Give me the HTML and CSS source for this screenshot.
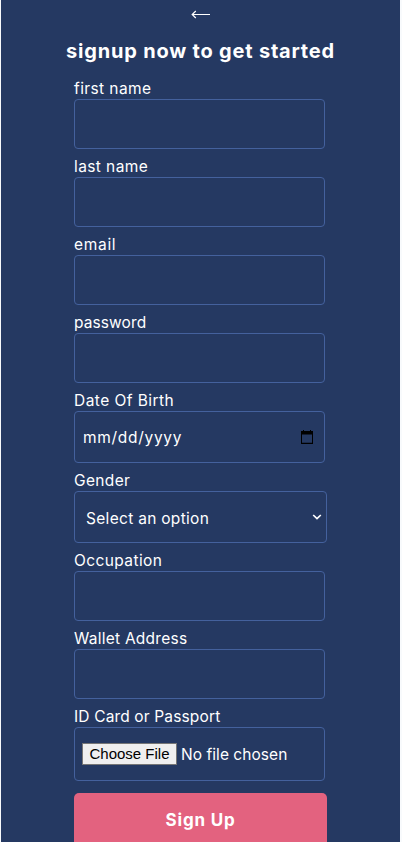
FILE: index.html
```html
<!DOCTYPE html>
<html lang="en">
<head>
<meta charset="utf-8">
<title>Sign up</title>
<link rel="stylesheet" href="styles.css">
</head>
<body>
<main class="page">
  <a class="back" aria-label="Back"><svg width="20" height="10" viewBox="0 0 20 10"><path d="M1.2 4.5H19M4.8 1L1.2 4.5L4.8 8" fill="none" stroke="#fff" stroke-width="1.2"/></svg></a>
  <h1 class="title">signup now to get started</h1>
  <form class="form">
    <label class="label first">first name</label>
    <input class="field" type="text">
    <label class="label last">last name</label>
    <input class="field" type="text">
    <label class="label email">email</label>
    <input class="field" type="text">
    <label class="label password">password</label>
    <input class="field" type="password">
    <label class="label birth">Date Of Birth</label>
    <div class="field date">
      <span class="date-text">mm/dd/yyyy</span>
      <svg width="12" height="14" viewBox="0 0 12 14"><path d="M0 1H2V0H3V1H9V0H10V1H12V14H0ZM1 4.4V12.8H11V4.4Z" fill="#000" fill-rule="evenodd"/></svg>
    </div>
    <label class="label gender">Gender</label>
    <div class="field select">
      <span class="select-text">Select an option</span>
      <svg width="10" height="6" viewBox="0 0 10 6"><path d="M1.2 1L5 4.6L8.8 1" fill="none" stroke="#fff" stroke-width="1.7"/></svg>
    </div>
    <label class="label occupation">Occupation</label>
    <input class="field" type="text">
    <label class="label wallet">Wallet Address</label>
    <input class="field" type="text">
    <label class="label card">ID Card or Passport</label>
    <div class="field file">
      <span class="choose">Choose File</span>
      <span class="file-text">No file chosen</span>
    </div>
    <button class="submit" type="button">Sign Up</button>
  </form>
</main>
</body>
</html>
```
FILE: styles.css
```css
* { box-sizing: border-box; }
html { background: #f8fafc; overflow: hidden; }
body { margin: 0; height: 842px; overflow: hidden; }
.page {
  width: 399px;
  height: 842px;
  margin-left: 1px;
  overflow: hidden;
  background: #253962;
  color: #fff;
  font: 15.5px/20px Inter, sans-serif;
  display: flex;
  flex-direction: column;
  align-items: center;
}
.back { flex: none; height: 38px; padding-top: 10px; }
.back svg { display: block; }
.title {
  flex: none;
  margin: 0 0 15px;
  height: 26px;
  font-size: 20px;
  line-height: 26px;
  font-weight: 700;
  letter-spacing: 0.8px;
  white-space: nowrap;
}
.form { flex: none; width: 253px; display: flex; flex-direction: column; align-items: flex-start; }
.label { height: 20px; line-height: 20px; white-space: nowrap; }
.first { letter-spacing: 0.4px; }
.last { letter-spacing: 0.4px; }
.email { letter-spacing: 0.7px; }
.password { letter-spacing: 0.1px; }
.birth { letter-spacing: 0.45px; }
.gender { letter-spacing: 0.35px; }
.occupation { letter-spacing: 0.4px; }
.wallet { letter-spacing: 0.25px; }
.card { letter-spacing: 0.15px; }
.field {
  width: 251px;
  height: 50px;
  margin: 0 0 8px;
  padding: 0 8px;
  border: 1px solid #44619d;
  border-radius: 4px;
  background: transparent;
  color: #fff;
  font: inherit;
  display: flex;
  align-items: center;
  white-space: nowrap;
}
.date { height: 52px; padding: 0 11px 0 8px; justify-content: space-between; }
.date-text { padding-top: 2px; letter-spacing: 0.7px; }
.select { width: 253px; height: 52px; padding: 0 4px 0 11px; justify-content: space-between; }
.select-text { padding-top: 3px; letter-spacing: 0.3px; }
.file { height: 54px; padding-left: 7px; gap: 4px; margin-bottom: 12px; }
.file-text { padding-top: 2px; letter-spacing: 0.05px; }
.choose {
  width: 95px;
  height: 22px;
  border: 1px solid #767676;
  background: #efefef;
  color: #000;
  font: 15px/20px "Liberation Sans", sans-serif;
  text-align: center;
}
.submit {
  width: 253px;
  height: 54px;
  border: 0;
  border-radius: 5px;
  background: #e3627f;
  color: #fff;
  font: 700 17px/20px Inter, sans-serif;
  letter-spacing: 0.8px;
}
```
